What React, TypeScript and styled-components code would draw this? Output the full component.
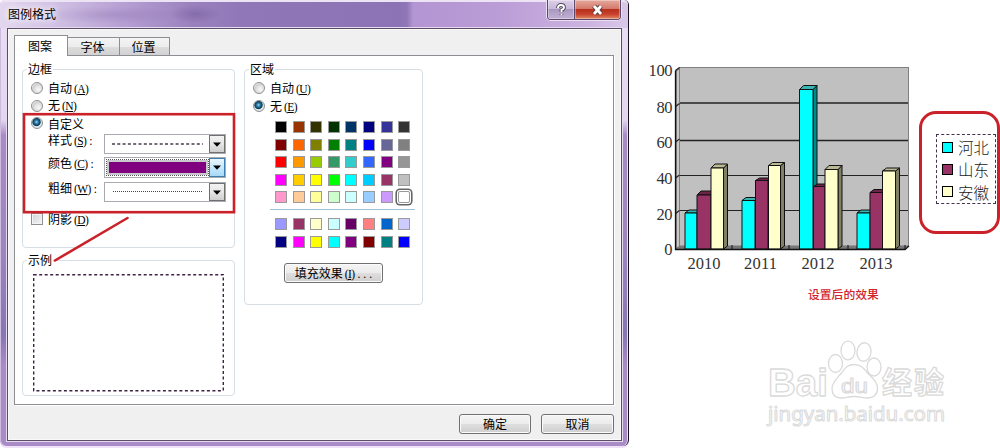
import React from "react";
import styled, { createGlobalStyle } from "styled-components";

const GlobalStyle = createGlobalStyle`
  * { box-sizing: border-box; }
  body { margin: 0; background: #fff; overflow: hidden; }
`;

const Page = styled.main`
  display: flex;
  width: 1000px;
  height: 448px;
  font-family: "Noto Sans CJK SC", sans-serif;
  font-size: 12px;
  color: #000;
`;

const Dialog = styled.section`
  position: relative;
  flex: none;
  display: flex;
  flex-direction: column;
  width: 629px;
  height: 446px;
  padding: 0 6px 5px 7px;
  border-right: 1px solid #17121f;
  border-radius: 5px 5px 6px 6px;
  background: linear-gradient(180deg, #e9dff3 0, #e3d6f0 120px, #a98bc6 135px, #9d85c0 250px, #8576b4 335px, #a98bc6 365px, #a98bc6 100%);
  box-shadow: inset 1px 0 #cdbbe0, inset -1px 0 #e7dcf2, 0 2px #f0e2fa;
`;

const TitleBar = styled.header`
  display: flex;
  flex: none;
  justify-content: space-between;
  height: 28px;
  margin: 0 -6px 0 -7px;
  padding: 0 7px 0 8px;
  border-top: 2px solid #ece4f5;
  border-radius: 5px 5px 0 0;
  background:
    radial-gradient(ellipse 75px 9px at 110px 13px, rgba(110, 82, 150, 0.22), transparent),
    radial-gradient(ellipse 26px 9px at 195px 12px, rgba(70, 45, 115, 0.25), transparent),
    linear-gradient(90deg, #e3d7ef 0, #cfbee3 60px, #b7a1d4 120px, #9b82be 190px, #9077b7 240px, #8b73b5 400px, #9077b7 407px, #b295d2 413px, #ba9dd6 500px, #cdb4e1 590px, #d9c8e8 100%);
`;

const Title = styled.h1`
  margin: 0;
  font-size: 12px;
  font-weight: 400;
  line-height: 24px;
  text-shadow: 0 0 6px #fff, 0 0 8px #fff;
`;

const WindowButtons = styled.div`
  display: flex;
  height: 20px;
  margin-top: -2px;
  border: 1px solid #5e4a68;
  border-top: 0;
  border-radius: 0 0 4px 4px;
  overflow: hidden;
  box-shadow: 0 0 0 1px #e9def3;
`;

const WindowButton = styled.button<{ $close?: boolean }>`
  display: flex;
  align-items: center;
  justify-content: center;
  width: ${(p) => (p.$close ? 46 : 26)}px;
  padding: 1px 0 0;
  border: 0;
  border-left: ${(p) => (p.$close ? "1px solid #5e4a68" : "0")};
  background: ${(p) =>
    p.$close
      ? "linear-gradient(#e5a99d 0, #d37a6b 45%, #b9301d 50%, #c8422c 75%, #e08a68 100%)"
      : "linear-gradient(#ddd0e8 0, #c8b8da 45%, #a997c0 50%, #c2b1d6 100%)"};
  box-shadow: inset 0 0 0 1px rgba(255, 255, 255, 0.35);
`;

const Client = styled.div`
  display: flex;
  flex-direction: column;
  flex: 1;
  padding: 6px 7px 0 6px;
  border: 1px solid #5c4d66;
  outline: 1px solid #e6daf0;
  background: #f0f0f0;
  box-shadow: inset 0 0 0 1px #fafafa;
`;

const TabList = styled.nav`
  display: flex;
  align-items: flex-end;
  height: 20px;
`;

const Tab = styled.button<{ $active?: boolean; $width: number }>`
  width: ${(p) => p.$width}px;
  height: ${(p) => (p.$active ? 21 : 18)}px;
  margin-bottom: ${(p) => (p.$active ? -1 : 0)}px;
  padding: 0 2px 0 0;
  border: 1px solid #8c8e94;
  border-left-width: ${(p) => (p.$active ? 1 : 0)}px;
  border-bottom: 0;
  background: ${(p) => (p.$active ? "#fff" : "linear-gradient(#f4f4f4 0, #ececec 50%, #dcdcdc 55%, #d2d2d2 100%)")};
  font: inherit;
  line-height: ${(p) => (p.$active ? 18 : 17)}px;
  z-index: ${(p) => (p.$active ? 1 : 0)};
`;

const TabPane = styled.div`
  display: flex;
  gap: 9px;
  align-items: flex-start;
  width: 600px;
  height: 350px;
  padding: 4px 8px 0 7px;
  border: 1px solid #8c8e94;
  background: #fff;
  box-shadow: 1px 1px #fff;
`;

const Column = styled.div`
  display: flex;
  flex-direction: column;
  gap: 3px;
`;

const Group = styled.fieldset<{ $width: number; $height: number }>`
  width: ${(p) => p.$width}px;
  height: ${(p) => p.$height}px;
  min-width: 0;
  margin: 0;
  padding: 1px 8px 0;
  border: 1px solid #d5dfe5;
  border-radius: 4px;
`;

const Legend = styled.legend`
  height: 18px;
  margin-left: -4px;
  padding: 0 1px;
  line-height: 17px;
`;

const Option = styled.label<{ $height?: number }>`
  display: flex;
  align-items: center;
  gap: 5px;
  height: ${(p) => p.$height ?? 18}px;
  line-height: 17px;
  white-space: nowrap;
`;

const Radio = styled.span<{ $checked?: boolean }>`
  width: 12px;
  height: 12px;
  border: 1px solid #8e8f8f;
  border-radius: 50%;
  background: ${(p) =>
    p.$checked
      ? "radial-gradient(circle at 45% 40%, #9fdcf5 0, #287ba5 22%, #0d3856 46%, #d6e3ea 56%, #f4f4f4 100%)"
      : "radial-gradient(circle at 65% 65%, #f8f8f8 0, #dcdcdc 50%, #c4c6c8 62%, #f4f4f4 72%)"};
`;

const CheckBox = styled.span`
  width: 12px;
  height: 12px;
  border: 1px solid #8e8f8f;
  background: linear-gradient(135deg, #cfd2d5, #f6f6f6);
  box-shadow: inset 0 0 0 1px #f4f4f4;
`;

const Mnemonic = styled.span`
  margin-left: 2px;
  font-family: "Liberation Serif", serif;
  font-size: 11.5px;
  letter-spacing: -0.6px;
  u { text-underline-offset: 1px; }
`;

const MnemonicTail = styled.span`
  letter-spacing: 0.1px;
`;

const Fields = styled.div`
  padding: 2px 0 0 17px;
`;

const FieldRow = styled.div<{ $height: number }>`
  display: flex;
  align-items: flex-start;
  height: ${(p) => p.$height}px;
`;

const FieldLabel = styled.span`
  width: 56px;
  line-height: 17px;
  margin-top: -3px;
  white-space: nowrap;
`;

const Combo = styled.div<{ $focused?: boolean }>`
  display: flex;
  width: 122px;
  height: ${(p) => (p.$focused ? 21 : 20)}px;
  border: 1px solid #a9abb0;
  background: #fff;
`;

const ComboValue = styled.div<{ $focused?: boolean }>`
  display: flex;
  flex: 1;
  align-items: center;
  margin: ${(p) => (p.$focused ? "2px 1px 2px 2px" : "0 6px 0 7px")};
  padding: ${(p) => (p.$focused ? "2px 2px" : "0")};
  outline: ${(p) => (p.$focused ? "1px dotted #555" : "0")};
  background: ${(p) => (p.$focused ? "#c8c8ce" : "none")};
`;

const Swatch = styled.span`
  width: 100%;
  height: 100%;
  background: #800080;
`;

const ComboArrow = styled.span<{ $hot?: boolean }>`
  display: flex;
  align-items: center;
  justify-content: center;
  width: 16px;
  border: 1px solid ${(p) => (p.$hot ? "#3c7fb1" : "#707070")};
  background: ${(p) => (p.$hot ? "linear-gradient(#eaf6fd, #bee6fd 60%, #a7d9f5)" : "linear-gradient(#f2f2f2, #e6e6e6 50%, #cfcfcf)")};
`;

const SampleBox = styled.div`
  width: 191px;
  height: 118px;
  margin: 4px 0 0 2px;
  svg { display: block; }
`;

const Palette = styled.div`
  display: grid;
  grid-template-columns: repeat(8, 12px);
  grid-auto-rows: 12px;
  column-gap: 5.6px;
  row-gap: 5.6px;
  margin-left: 22px;
`;

const MainPalette = styled(Palette)`
  padding-top: 6px;
`;

const Color = styled.span<{ $color: string; $selected?: boolean }>`
  border: 1px solid #9a9a9a;
  background: ${(p) => p.$color};
  box-shadow: ${(p) => (p.$selected ? "0 0 0 1px #fff, 0 0 0 2.6px #666" : "none")};
  border-radius: ${(p) => (p.$selected ? 2 : 0)}px;
`;

const Divider = styled.hr`
  width: 145px;
  height: 1px;
  margin: 6px 0 8px 17px;
  border: 0;
  background: #9fbfd3;
`;

const PushButton = styled.button<{ $width: number }>`
  width: ${(p) => p.$width}px;
  height: 20px;
  padding: 0;
  border: 1px solid #707070;
  border-radius: 3px;
  background: linear-gradient(#f4f4f4 0, #ececec 48%, #dedede 52%, #cfcfcf 100%);
  box-shadow: inset 0 0 0 1px #fbfbfb;
  font: inherit;
  line-height: 18px;
  white-space: nowrap;
`;

const EffectSlot = styled.div`
  margin: 15px 0 0 31px;
`;

const Footer = styled.footer`
  display: flex;
  justify-content: flex-end;
  gap: 10px;
  padding-top: 9px;
`;

const Annotation = styled.svg`
  position: absolute;
  left: 0;
  top: 0;
  pointer-events: none;
`;

const Result = styled.section`
  display: flex;
  flex-direction: column;
  width: 371px;
`;

const ResultTop = styled.div`
  display: flex;
  align-items: flex-start;
  height: 285px;
`;

const ChartSvg = styled.svg`
  flex: none;
  width: 290px;
  height: 285px;
`;

const Callout = styled.div`
  flex: none;
  width: 81px;
  height: 123px;
  margin-top: 111px;
  padding: 20px 0 0 14px;
  border: 3px solid #cb2229;
  border-radius: 17px;
`;

const ChartLegend = styled.ul`
  display: flex;
  flex-direction: column;
  width: 60px;
  height: 70px;
  margin: 0;
  padding: 1px 0 0 5px;
  list-style: none;
  border: 1px dashed #443152;
`;

const LegendItem = styled.li`
  display: flex;
  align-items: center;
  gap: 5px;
  height: 23px;
  font-size: 15.5px;
  font-weight: 300;
  line-height: 22px;
  white-space: nowrap;
  color: #222;
`;

const LegendKey = styled.span<{ $color: string }>`
  flex: none;
  width: 11px;
  height: 11px;
  border: 1px solid #000;
  background: ${(p) => p.$color};
`;

const Caption = styled.p`
  height: 20px;
  margin: 0 0 0 179px;
  font-size: 11.8px;
  font-weight: 500;
  line-height: 18px;
  color: #d2232a;
`;

const Watermark = styled.svg`
  width: 195px;
  height: 95px;
  margin: 29px 0 0 131px;
`;

const mainColors = [
  "#000000", "#993300", "#333300", "#003300", "#003366", "#000080", "#333399", "#333333",
  "#800000", "#ff6600", "#808000", "#008000", "#008080", "#0000ff", "#666699", "#808080",
  "#ff0000", "#ff9900", "#99cc00", "#339966", "#33cccc", "#3366ff", "#800080", "#969696",
  "#ff00ff", "#ffcc00", "#ffff00", "#00ff00", "#00ffff", "#00ccff", "#993366", "#c0c0c0",
  "#ff99cc", "#ffcc99", "#ffff99", "#ccffcc", "#ccffff", "#99ccff", "#cc99ff", "#ffffff",
];
const chartColors = [
  "#9999ff", "#993366", "#ffffcc", "#ccffff", "#660066", "#ff8080", "#0066cc", "#ccccff",
  "#000080", "#ff00ff", "#ffff00", "#00ffff", "#800080", "#800000", "#008080", "#0000ff",
];

const tones = {
  cyan: { face: "#00ffff", side: "#008b8b", top: "#37b5b5" },
  plum: { face: "#993366", side: "#4d1a33", top: "#6d2449" },
  cream: { face: "#ffffcc", side: "#808066", top: "#b9b994" },
};

type Tone = keyof typeof tones;
const bars: { x: number; w: number; y: number; d: number; tone: Tone }[] = [
  { x: 685, w: 12, y: 213, d: 3, tone: "cyan" },
  { x: 697, w: 14, y: 195, d: 4, tone: "plum" },
  { x: 711, w: 12.5, y: 168, d: 4, tone: "cream" },
  { x: 742, w: 13, y: 200.5, d: 3, tone: "cyan" },
  { x: 755.5, w: 12.5, y: 180.5, d: 2.5, tone: "plum" },
  { x: 768.5, w: 12, y: 165.5, d: 3, tone: "cream" },
  { x: 799.5, w: 13.5, y: 89.5, d: 4, tone: "cyan" },
  { x: 813.5, w: 11.5, y: 186.5, d: 2.5, tone: "plum" },
  { x: 825, w: 13, y: 169.5, d: 4, tone: "cream" },
  { x: 857, w: 13, y: 213, d: 3, tone: "cyan" },
  { x: 870, w: 12.5, y: 192.5, d: 3, tone: "plum" },
  { x: 882.5, w: 13, y: 171, d: 3, tone: "cream" },
];

const Key = ({ k, tail }: { k: string; tail?: string }) => (
  <Mnemonic>
    (<u>{k}</u>){tail && <MnemonicTail>{tail}</MnemonicTail>}
  </Mnemonic>
);

const Arrow = () => (
  <svg width="8" height="5" viewBox="0 0 8 5"><path d="M0 .5h8L4 4.800z" /></svg>
);

function Chart() {
  return (
    <ChartSvg viewBox="629 0 290 285">
      <path d="M676 71 680 68V246L676 249Z" fill="#c8c8c8" stroke="#444" strokeWidth="1" />
      <rect x="679.5" y="67.5" width="229" height="179" fill="#c0c0c0" stroke="#808080" />
      <path d="M676 249 680 245.5H908.5L905 249Z" fill="#777" />
      {[103, 140.5, 175.5, 210.5].map((y, i) => (
        <path key={y} d={`M680 ${y}H908`} stroke="#222" strokeWidth={i < 2 ? 1.6 : 1.1} />
      ))}
      {[70.5, 106.5, 142, 178, 213.5].map((y) => (
        <path key={y} d={`M675.5 ${y}l4-3`} stroke="#222" strokeWidth="1.2" />
      ))}
      {bars.map(({ x, w, y, d, tone }) => (
        <g key={x} stroke="#111" strokeWidth="1" strokeLinejoin="round">
          <path d={`M${x + w} ${y}l4-${d}V246l-4 3z`} fill={tones[tone].side} />
          <path d={`M${x} ${y}l4-${d}h${w}l-4 ${d}z`} fill={tones[tone].top} />
          <path d={`M${x} ${y}h${w}V249h-${w}z`} fill={tones[tone].face} />
        </g>
      ))}
      <path d="M675.5 70.5V249.5H905L909 246" fill="none" stroke="#111" strokeWidth="1.3" />
      {[732, 789, 848, 905].map((x) => (
        <path key={x} d={`M${x} 249v-4`} stroke="#111" />
      ))}
      <g fontFamily='"Liberation Serif", serif' fontSize="16.5" fill="#333">
        {[
          ["100", 76, 24], ["80", 113, 16], ["60", 148, 16], ["40", 184, 16], ["20", 219.5, 16], ["0", 255, 8],
        ].map(([label, y, w]) => (
          <text key={label} x="672.5" y={y} textAnchor="end" textLength={w}>{label}</text>
        ))}
        {[["2010", 704], ["2011", 760.5], ["2012", 818], ["2013", 876]].map(([label, x]) => (
          <text key={label} x={x} y="268.5" textAnchor="middle" textLength="33">{label}</text>
        ))}
      </g>
    </ChartSvg>
  );
}

export default function App() {
  return (
    <>
      <GlobalStyle />
      <Page>
        <Dialog>
          <TitleBar>
            <Title>图例格式</Title>
            <WindowButtons>
              <WindowButton aria-label="Help">
                <svg width="12" height="14" viewBox="0 0 12 14" fill="none">
                  <path d="M3 5q0-3 3-3t3 2.500Q9 6 6.500 7v2M6.500 11v1" stroke="#514759" strokeWidth="3.8" />
                  <path d="M3 5q0-3 3-3t3 2.500Q9 6 6.500 7v2M6.500 11v1" stroke="#fff" strokeWidth="1.9" />
                </svg>
              </WindowButton>
              <WindowButton $close aria-label="Close">
                <svg width="13" height="12" viewBox="0 0 13 12">
                  <path d="M3 2 10 10M10 2 3 10" stroke="#593c42" strokeWidth="4.8" />
                  <path d="M3 2 10 10M10 2 3 10" stroke="#fff" strokeWidth="2.8" />
                </svg>
              </WindowButton>
            </WindowButtons>
          </TitleBar>
          <Client>
            <TabList>
              <Tab $active $width={54}>图案</Tab>
              <Tab $width={52}>字体</Tab>
              <Tab $width={50}>位置</Tab>
            </TabList>
            <TabPane>
              <Column>
                <Group $width={213} $height={188}>
                  <Legend>边框</Legend>
                  <Option><Radio /><span>自动<Key k="A" /></span></Option>
                  <Option $height={17}><Radio /><span>无<Key k="N" /></span></Option>
                  <Option><Radio $checked /><span>自定义</span></Option>
                  <Fields>
                    <FieldRow $height={23}>
                      <FieldLabel>样式<Key k="S" tail=" :" /></FieldLabel>
                      <Combo>
                        <ComboValue>
                          <svg width="91" height="2"><path d="M0 1H91" stroke="#4a3a4e" strokeWidth="1.3" strokeDasharray="3 2.3" /></svg>
                        </ComboValue>
                        <ComboArrow><Arrow /></ComboArrow>
                      </Combo>
                    </FieldRow>
                    <FieldRow $height={25}>
                      <FieldLabel>颜色<Key k="C" tail=" :" /></FieldLabel>
                      <Combo $focused>
                        <ComboValue $focused><Swatch /></ComboValue>
                        <ComboArrow $hot><Arrow /></ComboArrow>
                      </Combo>
                    </FieldRow>
                    <FieldRow $height={28}>
                      <FieldLabel>粗细<Key k="W" tail=" :" /></FieldLabel>
                      <Combo>
                        <ComboValue>
                          <svg width="91" height="2"><path d="M1 .5H90" stroke="#444" strokeDasharray="1 1" /></svg>
                        </ComboValue>
                        <ComboArrow><Arrow /></ComboArrow>
                      </Combo>
                    </FieldRow>
                  </Fields>
                  <Option><CheckBox /><span>阴影<Key k="D" /></span></Option>
                </Group>
                <Group $width={213} $height={145}>
                  <Legend>示例</Legend>
                  <SampleBox>
                    <svg width="191" height="118">
                      <rect x="0.7" y="0.7" width="189.6" height="116" fill="none" stroke="#3d2443" strokeWidth="1.4" strokeDasharray="3 2.5" />
                    </svg>
                  </SampleBox>
                </Group>
              </Column>
              <Group $width={179} $height={245}>
                <Legend>区域</Legend>
                <Option><Radio /><span>自动<Key k="U" /></span></Option>
                <Option><Radio $checked /><span>无<Key k="E" /></span></Option>
                <MainPalette>
                  {mainColors.map((c, i) => <Color key={i} $color={c} $selected={i === 39} />)}
                </MainPalette>
                <Divider />
                <Palette>
                  {chartColors.map((c, i) => <Color key={i} $color={c} />)}
                </Palette>
                <EffectSlot>
                  <PushButton $width={99}>填充效果<Key k="I" tail=" . . ." /></PushButton>
                </EffectSlot>
              </Group>
            </TabPane>
            <Footer>
              <PushButton $width={72}>确定</PushButton>
              <PushButton $width={73}>取消</PushButton>
            </Footer>
          </Client>
          <Annotation width="260" height="270">
            <rect x="24" y="114.2" width="210" height="98" fill="none" stroke="#cb2229" strokeWidth="2.6" />
            <path d="M127.5 218 55 260.5" stroke="#cb2229" strokeWidth="2.6" strokeLinecap="round" />
          </Annotation>
        </Dialog>
        <Result>
          <ResultTop>
            <Chart />
            <Callout>
              <ChartLegend>
                <LegendItem><LegendKey $color="#00ffff" />河北</LegendItem>
                <LegendItem><LegendKey $color="#993366" />山东</LegendItem>
                <LegendItem><LegendKey $color="#ffffcc" />安徽</LegendItem>
              </ChartLegend>
            </Callout>
          </ResultTop>
          <Caption>设置后的效果</Caption>
          <Watermark viewBox="760 334 195 95">
            <g fill="#fff" stroke="#dadada" strokeWidth="1.3" strokeLinejoin="round">
              <text x="768" y="396" fontFamily='"Liberation Sans", sans-serif' fontWeight="700" fontSize="39" textLength="60" lengthAdjust="spacingAndGlyphs">Bai</text>
              <ellipse cx="835.5" cy="363.5" rx="7" ry="9" />
              <ellipse cx="848" cy="350.5" rx="7" ry="9.3" />
              <ellipse cx="864" cy="352" rx="7" ry="9.3" transform="rotate(8 864 352)" />
              <ellipse cx="874" cy="367" rx="7" ry="9" />
              <path d="M854 364.5c7 0 10 4 14 9 5 5 9.500 9 9.500 15 0 6-4 9.500-9.500 9.500-5 0-8-1.500-14-1.500s-8 1.500-13 1.500c-6 0-9-3.500-9-9.500 0-6 5-10 9-15 4-5 6-9 13-9z" />
              <text x="841" y="393" fontFamily='"Liberation Sans", sans-serif' fontSize="21" strokeWidth="1.1" textLength="27" lengthAdjust="spacingAndGlyphs">du</text>
              <text x="882" y="393" fontFamily='"Noto Sans CJK SC", sans-serif' fontWeight="700" fontSize="30" textLength="62">经验</text>
              <text x="768" y="420.500" fontFamily='"Noto Sans", sans-serif' fontSize="19.5" textLength="177" lengthAdjust="spacingAndGlyphs" strokeWidth="1">jingyan.baidu.com</text>
            </g>
          </Watermark>
        </Result>
      </Page>
    </>
  );
}
